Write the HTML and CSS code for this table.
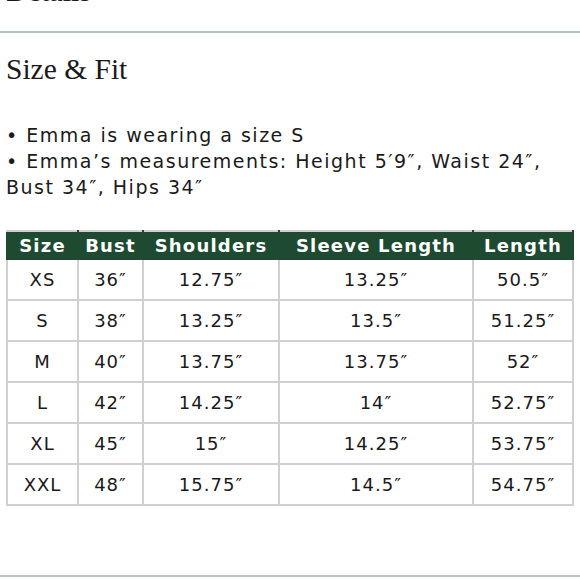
FILE: index.html
```html
<!DOCTYPE html>
<html>
<head>
<meta charset="utf-8">
<link rel="stylesheet" href="styles.css">
</head>
<body>
<div class="page">
  <div class="details-wrap"><h2 class="details">Details</h2></div>
  <hr class="rule">
  <h2 class="title">Size &amp; Fit</h2>
  <ul class="bullets">
    <li>• Emma is wearing a size S</li>
    <li>• Emma’s measurements: Height 5′9″, Waist 24″, Bust 34″, Hips 34″</li>
  </ul>
  <table class="sizes">
    <colgroup>
      <col class="c1"><col class="c2"><col class="c3"><col class="c4"><col class="c5">
    </colgroup>
    <thead>
      <tr><th>Size</th><th>Bust</th><th>Shoulders</th><th>Sleeve Length</th><th>Length</th></tr>
    </thead>
    <tbody>
      <tr><td>XS</td><td>36″</td><td>12.75″</td><td>13.25″</td><td>50.5″</td></tr>
      <tr><td>S</td><td>38″</td><td>13.25″</td><td>13.5″</td><td>51.25″</td></tr>
      <tr><td>M</td><td>40″</td><td>13.75″</td><td>13.75″</td><td>52″</td></tr>
      <tr><td>L</td><td>42″</td><td>14.25″</td><td>14″</td><td>52.75″</td></tr>
      <tr><td>XL</td><td>45″</td><td>15″</td><td>14.25″</td><td>53.75″</td></tr>
      <tr><td>XXL</td><td>48″</td><td>15.75″</td><td>14.5″</td><td>54.75″</td></tr>
    </tbody>
  </table>
  <hr class="rule bottom">
</div>
</body>
</html>
```
FILE: styles.css
```css
html, body {
  margin: 0;
  padding: 0;
  background: #fff;
}
.page {
  width: 580px;
  height: 580px;
  overflow: hidden;
  position: relative;
  color: #1a1a1a;
}
.details-wrap {
  display: flow-root;
  height: 31px;
  overflow: hidden;
}
.details {
  margin: -26px 0 0 6px;
  font-family: "Liberation Serif", serif;
  font-weight: normal;
  font-size: 30px;
  line-height: 34px;
}
.rule {
  border: 0;
  height: 2px;
  background: #b3c0c0;
  margin: 0;
}
.title {
  margin: 19px 0 0 6px;
  font-family: "Liberation Serif", serif;
  font-weight: normal;
  font-size: 29.5px;
  line-height: 34px;
}
.bullets {
  list-style: none;
  margin: 36px 0 0 6px;
  padding: 0;
  font-family: "DejaVu Sans", sans-serif;
  font-size: 19px;
  line-height: 26px;
  letter-spacing: 1.5px;
  width: 562px;
}
.sizes {
  margin: 30px 0 0 6px;
  width: 566px;
  border-collapse: collapse;
  table-layout: fixed;
  font-family: "DejaVu Sans", sans-serif;
}
.c1 { width: 71px; }
.c2 { width: 65px; }
.c3 { width: 136px; }
.c4 { width: 194px; }
.c5 { width: 100px; }
.sizes th {
  background: #1e4a32;
  color: #fff;
  font-size: 18px;
  font-weight: bold;
  letter-spacing: 1.2px;
  height: 26px;
  padding: 0;
  border: 2px solid #1e4a32;
  border-top-color: #d0d0d0;
}
.sizes td {
  height: 39px;
  padding: 0;
  text-align: center;
  font-size: 18px;
  letter-spacing: 1px;
  border: 2px solid #d0d0d0;
  color: #1a1a1a;
}
.bottom {
  position: absolute;
  left: 0;
  right: 0;
  top: 575px;
  background: #b8c6c2;
}
```
